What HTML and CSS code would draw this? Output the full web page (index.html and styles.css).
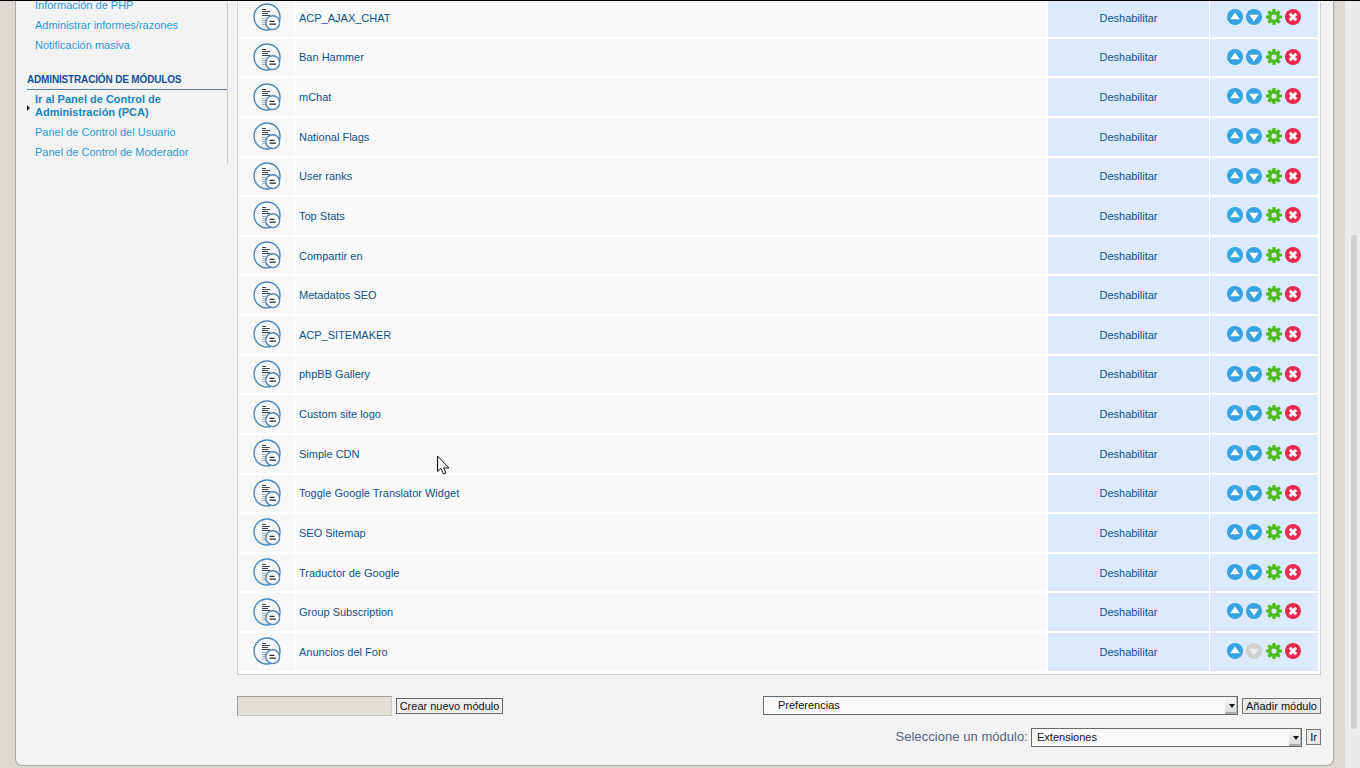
FILE: index.html
```html
<!DOCTYPE html>
<html lang="es">
<head>
<meta charset="utf-8">
<title>Administración de módulos</title>
<link rel="stylesheet" href="styles.css">
</head>
<body>
<svg class="defs" width="0" height="0" aria-hidden="true">
  <defs>
    <linearGradient id="discFill" x1="0.2" y1="0" x2="0.8" y2="1">
      <stop offset="0" stop-color="#ffffff"/>
      <stop offset="0.6" stop-color="#f1f3f5"/>
      <stop offset="1" stop-color="#d5dbe1"/>
    </linearGradient>
    <symbol id="i-module" viewBox="0 0 28 28">
      <circle cx="14" cy="14" r="13" fill="url(#discFill)" stroke="#4a86bd" stroke-width="1.4"/>
      <path d="M9 6.500h4M9 8.500h8M9 10.500h6M9 12.500h8" stroke="#3c4650" stroke-width="1" fill="none"/>
      <path d="M9 15.500h4M9 17.500h4M9 19.500h4M9 21.500h4" stroke="#a9b2ba" stroke-width="1" fill="none"/>
      <circle cx="19.700" cy="19.700" r="6.900" fill="#fff" stroke="#4a86bd" stroke-width="1.400"/>
      <path d="M16.500 18.300h5M16.500 21.200h6.500" stroke="#1f2830" stroke-width="1.300" fill="none"/>
    </symbol>
    <symbol id="i-up" viewBox="0 0 16 16">
      <circle cx="8" cy="8" r="8" fill="#36a3e2"/>
      <path d="M8 3.400l4.800 6.800H3.200z" fill="#fff"/>
    </symbol>
    <symbol id="i-down" viewBox="0 0 16 16">
      <circle cx="8" cy="8" r="8" fill="#36a3e2"/>
      <path d="M8 12.600L3.200 5.800h9.600z" fill="#fff"/>
    </symbol>
    <symbol id="i-down-off" viewBox="0 0 16 16">
      <circle cx="8" cy="8" r="8" fill="#d0d0d0"/>
      <path d="M8 12.600L3.200 5.800h9.600z" fill="#ececec"/>
    </symbol>
    <symbol id="i-gear" viewBox="0 0 16 16">
      <circle cx="8" cy="8" r="4.300" fill="none" stroke="#4cbc1c" stroke-width="3.400"/>
      <path d="M6.400 0h3.200v3H6.400zM6.400 13h3.200v3H6.400zM0 6.400h3v3.200H0zM13 6.400h3v3.200h-3z" fill="#4cbc1c"/>
      <path d="M6.400 0h3.200v3H6.400zM6.400 13h3.200v3H6.400zM0 6.400h3v3.200H0zM13 6.400h3v3.200h-3z" fill="#4cbc1c" transform="rotate(45 8 8)"/>
    </symbol>
    <symbol id="i-del" viewBox="0 0 16 16">
      <circle cx="8" cy="8" r="8" fill="#e5294f"/>
      <path d="M4.800 4.800l6.400 6.400M11.200 4.800l-6.400 6.400" stroke="#fff" stroke-width="3" fill="none"/>
    </symbol>
  </defs>
</svg>

<div class="topline"></div>

<div class="panel">
  <nav class="side">
    <ul class="menu menu-first">
      <li><a href="#">Información de PHP</a></li>
      <li><a href="#">Administrar informes/razones</a></li>
      <li><a href="#">Notificación masiva</a></li>
    </ul>
    <h3 class="side-title">Administración de módulos</h3>
    <ul class="menu">
      <li class="active"><a href="#">Ir al Panel de Control de Administración (PCA)</a></li>
      <li><a href="#">Panel de Control del Usuario</a></li>
      <li><a href="#">Panel de Control de Moderador</a></li>
    </ul>
  </nav>

  <main class="main">
    <div class="table">
      <div class="row"><div class="c-icon"><svg class="mod"><use href="#i-module"/></svg></div><div class="c-name"><a href="#">ACP_AJAX_CHAT</a></div><div class="c-state"><a href="#">Deshabilitar</a></div><div class="c-acts"><svg class="act"><use href="#i-up"/></svg><svg class="act"><use href="#i-down"/></svg><svg class="act"><use href="#i-gear"/></svg><svg class="act"><use href="#i-del"/></svg></div></div>
      <div class="row"><div class="c-icon"><svg class="mod"><use href="#i-module"/></svg></div><div class="c-name"><a href="#">Ban Hammer</a></div><div class="c-state"><a href="#">Deshabilitar</a></div><div class="c-acts"><svg class="act"><use href="#i-up"/></svg><svg class="act"><use href="#i-down"/></svg><svg class="act"><use href="#i-gear"/></svg><svg class="act"><use href="#i-del"/></svg></div></div>
      <div class="row"><div class="c-icon"><svg class="mod"><use href="#i-module"/></svg></div><div class="c-name"><a href="#">mChat</a></div><div class="c-state"><a href="#">Deshabilitar</a></div><div class="c-acts"><svg class="act"><use href="#i-up"/></svg><svg class="act"><use href="#i-down"/></svg><svg class="act"><use href="#i-gear"/></svg><svg class="act"><use href="#i-del"/></svg></div></div>
      <div class="row"><div class="c-icon"><svg class="mod"><use href="#i-module"/></svg></div><div class="c-name"><a href="#">National Flags</a></div><div class="c-state"><a href="#">Deshabilitar</a></div><div class="c-acts"><svg class="act"><use href="#i-up"/></svg><svg class="act"><use href="#i-down"/></svg><svg class="act"><use href="#i-gear"/></svg><svg class="act"><use href="#i-del"/></svg></div></div>
      <div class="row"><div class="c-icon"><svg class="mod"><use href="#i-module"/></svg></div><div class="c-name"><a href="#">User ranks</a></div><div class="c-state"><a href="#">Deshabilitar</a></div><div class="c-acts"><svg class="act"><use href="#i-up"/></svg><svg class="act"><use href="#i-down"/></svg><svg class="act"><use href="#i-gear"/></svg><svg class="act"><use href="#i-del"/></svg></div></div>
      <div class="row"><div class="c-icon"><svg class="mod"><use href="#i-module"/></svg></div><div class="c-name"><a href="#">Top Stats</a></div><div class="c-state"><a href="#">Deshabilitar</a></div><div class="c-acts"><svg class="act"><use href="#i-up"/></svg><svg class="act"><use href="#i-down"/></svg><svg class="act"><use href="#i-gear"/></svg><svg class="act"><use href="#i-del"/></svg></div></div>
      <div class="row"><div class="c-icon"><svg class="mod"><use href="#i-module"/></svg></div><div class="c-name"><a href="#">Compartir en</a></div><div class="c-state"><a href="#">Deshabilitar</a></div><div class="c-acts"><svg class="act"><use href="#i-up"/></svg><svg class="act"><use href="#i-down"/></svg><svg class="act"><use href="#i-gear"/></svg><svg class="act"><use href="#i-del"/></svg></div></div>
      <div class="row"><div class="c-icon"><svg class="mod"><use href="#i-module"/></svg></div><div class="c-name"><a href="#">Metadatos SEO</a></div><div class="c-state"><a href="#">Deshabilitar</a></div><div class="c-acts"><svg class="act"><use href="#i-up"/></svg><svg class="act"><use href="#i-down"/></svg><svg class="act"><use href="#i-gear"/></svg><svg class="act"><use href="#i-del"/></svg></div></div>
      <div class="row"><div class="c-icon"><svg class="mod"><use href="#i-module"/></svg></div><div class="c-name"><a href="#">ACP_SITEMAKER</a></div><div class="c-state"><a href="#">Deshabilitar</a></div><div class="c-acts"><svg class="act"><use href="#i-up"/></svg><svg class="act"><use href="#i-down"/></svg><svg class="act"><use href="#i-gear"/></svg><svg class="act"><use href="#i-del"/></svg></div></div>
      <div class="row"><div class="c-icon"><svg class="mod"><use href="#i-module"/></svg></div><div class="c-name"><a href="#">phpBB Gallery</a></div><div class="c-state"><a href="#">Deshabilitar</a></div><div class="c-acts"><svg class="act"><use href="#i-up"/></svg><svg class="act"><use href="#i-down"/></svg><svg class="act"><use href="#i-gear"/></svg><svg class="act"><use href="#i-del"/></svg></div></div>
      <div class="row"><div class="c-icon"><svg class="mod"><use href="#i-module"/></svg></div><div class="c-name"><a href="#">Custom site logo</a></div><div class="c-state"><a href="#">Deshabilitar</a></div><div class="c-acts"><svg class="act"><use href="#i-up"/></svg><svg class="act"><use href="#i-down"/></svg><svg class="act"><use href="#i-gear"/></svg><svg class="act"><use href="#i-del"/></svg></div></div>
      <div class="row"><div class="c-icon"><svg class="mod"><use href="#i-module"/></svg></div><div class="c-name"><a href="#">Simple CDN</a></div><div class="c-state"><a href="#">Deshabilitar</a></div><div class="c-acts"><svg class="act"><use href="#i-up"/></svg><svg class="act"><use href="#i-down"/></svg><svg class="act"><use href="#i-gear"/></svg><svg class="act"><use href="#i-del"/></svg></div></div>
      <div class="row"><div class="c-icon"><svg class="mod"><use href="#i-module"/></svg></div><div class="c-name"><a href="#">Toggle Google Translator Widget</a></div><div class="c-state"><a href="#">Deshabilitar</a></div><div class="c-acts"><svg class="act"><use href="#i-up"/></svg><svg class="act"><use href="#i-down"/></svg><svg class="act"><use href="#i-gear"/></svg><svg class="act"><use href="#i-del"/></svg></div></div>
      <div class="row"><div class="c-icon"><svg class="mod"><use href="#i-module"/></svg></div><div class="c-name"><a href="#">SEO Sitemap</a></div><div class="c-state"><a href="#">Deshabilitar</a></div><div class="c-acts"><svg class="act"><use href="#i-up"/></svg><svg class="act"><use href="#i-down"/></svg><svg class="act"><use href="#i-gear"/></svg><svg class="act"><use href="#i-del"/></svg></div></div>
      <div class="row"><div class="c-icon"><svg class="mod"><use href="#i-module"/></svg></div><div class="c-name"><a href="#">Traductor de Google</a></div><div class="c-state"><a href="#">Deshabilitar</a></div><div class="c-acts"><svg class="act"><use href="#i-up"/></svg><svg class="act"><use href="#i-down"/></svg><svg class="act"><use href="#i-gear"/></svg><svg class="act"><use href="#i-del"/></svg></div></div>
      <div class="row"><div class="c-icon"><svg class="mod"><use href="#i-module"/></svg></div><div class="c-name"><a href="#">Group Subscription</a></div><div class="c-state"><a href="#">Deshabilitar</a></div><div class="c-acts"><svg class="act"><use href="#i-up"/></svg><svg class="act"><use href="#i-down"/></svg><svg class="act"><use href="#i-gear"/></svg><svg class="act"><use href="#i-del"/></svg></div></div>
      <div class="row"><div class="c-icon"><svg class="mod"><use href="#i-module"/></svg></div><div class="c-name"><a href="#">Anuncios del Foro</a></div><div class="c-state"><a href="#">Deshabilitar</a></div><div class="c-acts"><svg class="act"><use href="#i-up"/></svg><svg class="act"><use href="#i-down-off"/></svg><svg class="act"><use href="#i-gear"/></svg><svg class="act"><use href="#i-del"/></svg></div></div>
    </div>

    <form class="form-add">
      <div class="add-new">
        <input class="text-input" type="text" disabled>
        <button class="btn btn-create" type="button">Crear nuevo módulo</button>
      </div>
      <div class="add-ext">
        <span class="sel sel-wide"><select class="sel-box sel-indent"><option>Preferencias</option></select></span>
        <button class="btn" type="button">Añadir módulo</button>
      </div>
    </form>

    <form class="form-pick">
      <label class="pick-label" for="pick">Seleccione un módulo:</label>
      <span class="sel sel-pick"><select class="sel-box" id="pick"><option>Extensiones</option></select></span>
      <button class="btn btn-small" type="button">Ir</button>
    </form>
  </main>
</div>

<div class="scrollbar"><div class="thumb"></div></div>

<svg class="cursor" width="14" height="20" viewBox="0 0 14 20" aria-hidden="true">
  <path d="M1.500 1v15.500l3.500-3 2.500 5.500 2.500-1-2.300-5H13z" fill="#f2f2f2" stroke="#111" stroke-width="1"/>
</svg>
</body>
</html>
```

FILE: styles.css
```css
* { box-sizing: border-box; }

html, body {
  margin: 0;
  height: 768px;
  overflow: hidden;
}

body {
  position: relative;
  background: #dcd9d2;
  font-family: "Liberation Sans", Arial, sans-serif;
  font-size: 11px;
  color: #536482;
}

a { text-decoration: none; }

.defs { position: absolute; }

.topline {
  position: absolute;
  left: 0;
  top: 0;
  width: 100%;
  height: 1px;
  background: #000;
  z-index: 5;
}

.panel {
  display: flex;
  width: 1319px;
  height: 806px;
  margin: -40px 0 0 15px;
  padding-left: 12px;
  background: #f3f3f3;
  border-left: 1px solid #a8a8a4;
  border-right: 1px solid #a8a8a4;
  border-bottom: 1px solid #a8a8a4;
  border-radius: 0 0 7px 7px;
}

/* sidebar */
.side {
  flex: none;
  width: 201px;
  height: 204px;
  padding-top: 39px;
  border-right: 1px solid #cccccc;
  margin-left: -1px;
}

.menu {
  list-style: none;
  margin: 0;
  padding: 0;
}

.menu li {
  padding: 0 8px;
  margin-bottom: 7px;
  line-height: 13px;
}

.menu a {
  color: #2a9bd8;
}

.side-title {
  margin: 22px 0 3px;
  padding-bottom: 3px;
  font-size: 10px;
  line-height: 12px;
  font-weight: bold;
  letter-spacing: -0.16px;
  text-transform: uppercase;
  color: #115098;
  border-bottom: 1px solid #5a7f9f;
}

.menu .active {
  position: relative;
  font-weight: bold;
}

.menu .active a { color: #1a84c4; }

.menu .active::before {
  content: "";
  position: absolute;
  left: 0;
  top: 12px;
  border-left: 3px solid #222;
  border-top: 3px solid transparent;
  border-bottom: 3px solid transparent;
}

/* main column */
.main {
  flex: none;
  width: 1084px;
  margin-left: 9px;
  padding-top: 36px;
}

.table {
  padding: 2px 2px 1px 1px;
  background: #fff;
  border: 1px solid #cfcfd6;
}

.row {
  display: grid;
  grid-template-columns: 55px 752px 161px 108px;
  column-gap: 1px;
  height: 39.625px;
  border-bottom: 2px solid #fff;
}

.row > div {
  display: flex;
  align-items: center;
}

.c-icon {
  justify-content: center;
  background: #f7f7f7;
}

.c-name {
  padding-left: 4px;
  background: #f9f9f9;
}

.c-name a,
.c-state a { color: #105289; }

.c-state {
  justify-content: center;
  background: #dbeafd;
}

.c-acts {
  justify-content: center;
  gap: 3.300px;
  background: #dbeafd;
}

.mod {
  width: 28px;
  height: 28px;
  margin-bottom: 1px;
}

.act {
  width: 16px;
  height: 16px;
  margin-bottom: 1.500px;
}

/* forms */
.form-add {
  display: flex;
  justify-content: space-between;
  align-items: center;
  margin-top: 21px;
}

.add-new,
.add-ext,
.form-pick {
  display: flex;
  align-items: center;
}

.text-input {
  width: 155px;
  height: 20px;
  padding: 0;
  margin-right: 4px;
  background: #e1ddd7;
  border: 1px solid #cdcbc4;
  border-top-color: #9c9c9c;
  border-left-color: #9c9c9c;
}

.btn {
  height: 16px;
  padding: 1px 2px 0;
  background: #efefef;
  border: 1px solid #666;
  font: 11px "Liberation Sans", Arial, sans-serif;
  line-height: 13px;
  color: #111;
}

.btn-create { width: 107px; }

.add-ext .btn {
  width: 79px;
  margin-left: 4px;
  background: #e9e9e9;
  border-color: #777;
}

.sel {
  position: relative;
  display: block;
}

.sel::after {
  content: "";
  position: absolute;
  right: 1px;
  top: 1px;
  bottom: 1px;
  width: 11px;
  background: linear-gradient(#f6f6f6, #dedede);
  border-bottom: 2px solid #aaa;
  border-right: 1px solid #bbb;
  pointer-events: none;
}

.sel::before {
  content: "";
  position: absolute;
  right: 3px;
  bottom: 7px;
  z-index: 1;
  border-top: 4px solid #111;
  border-left: 3px solid transparent;
  border-right: 3px solid transparent;
  pointer-events: none;
}

.sel-wide { width: 475px; }
.sel-pick { width: 271px; }

.sel-box {
  display: block;
  width: 100%;
  height: 19px;
  appearance: none;
  -webkit-appearance: none;
  padding: 0 0 0 5px;
  background: #fbfbfb;
  border: 1px solid #6a6a6a;
  border-radius: 0;
  font: 11px "Liberation Sans", Arial, sans-serif;
  color: #111;
}

.sel-indent {
  padding-left: 14px;
  padding-bottom: 2px;
}

.form-pick {
  justify-content: flex-end;
  margin-top: 12px;
}

.pick-label {
  margin-right: 3px;
  margin-bottom: 2px;
  font-size: 13px;
  letter-spacing: 0.05px;
  color: #536482;
}

.btn-small {
  width: 15px;
  height: 16px;
  padding: 0;
  margin-left: 4px;
  background: #e9e9e9;
  border-color: #777;
}

/* scrollbar */
.scrollbar {
  position: absolute;
  right: 0;
  top: 0;
  width: 15px;
  height: 768px;
  background: #ebebeb;
}

.thumb {
  position: absolute;
  left: 6px;
  top: 235px;
  width: 6px;
  height: 494px;
  background: #d0d0d0;
  border-radius: 3px;
}

.cursor {
  position: absolute;
  left: 436px;
  top: 455px;
  z-index: 6;
}
```
